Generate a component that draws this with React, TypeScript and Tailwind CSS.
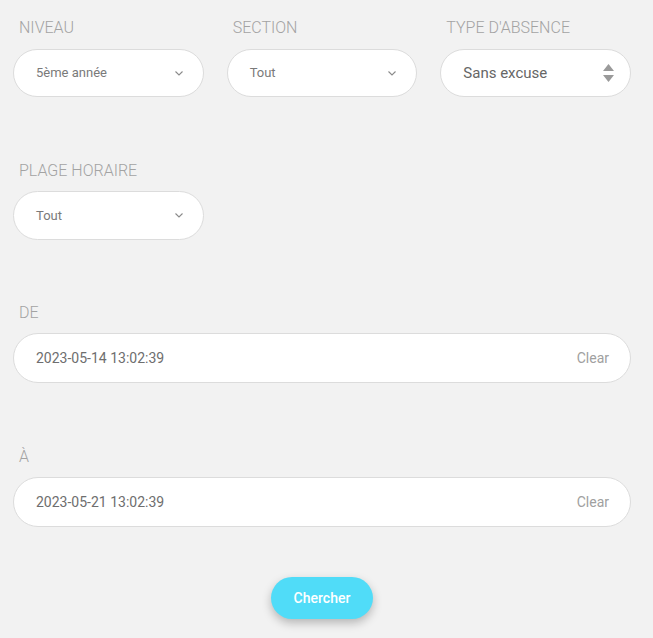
const Chevron = () => (
    <svg width="8" height="5" viewBox="0 0 8 5" fill="none" className="shrink-0">
        <path d="M0.5 0.5L4 4L7.5 0.5" stroke="#8a8a8a" strokeWidth="1.1" />
    </svg>
);

const SortArrows = () => (
    <svg width="11" height="18" viewBox="0 0 11 18" className="shrink-0">
        <path d="M5.5 0L11 7H0Z" fill="#9a9a9a" />
        <path d="M5.5 18L11 11H0Z" fill="#9a9a9a" />
    </svg>
);

const Label = ({ children, className = '' }: { children: string; className?: string }) => (
    <div className={`h-6 leading-6 text-[16px] font-light text-[#a3a3a3] pl-[6px] ${className}`}>
        {children}
    </div>
);

const Select = ({ value }: { value: string }) => (
    <div className="h-12 rounded-full bg-white border border-[#dcdcdc] flex items-center justify-between pl-[22px] pr-[20px]">
        <span className="text-[13px] text-[#7a7a7a]">{value}</span>
        <Chevron />
    </div>
);

const DateInput = ({ value }: { value: string }) => (
    <div className="h-[50px] rounded-full bg-white border border-[#dcdcdc] flex items-center justify-between pl-[22px] pr-[21px]">
        <span className="text-[14px] text-[#6e6e6e]">{value}</span>
        <span className="text-[14px] text-[#a0a0a0]">Clear</span>
    </div>
);

const App = () => {
    return (
        <div
            className="min-h-screen bg-[#f2f2f2] pl-[13px] pr-[22px] pt-[16px] pb-4"
            style={{ fontFamily: 'Roboto, "Liberation Sans", sans-serif' }}
        >
            {/* row 1 */}
            <div className="grid grid-cols-3 gap-[23px]">
                <div>
                    <Label className="mb-[9px]">NIVEAU</Label>
                    <Select value="5ème année" />
                </div>
                <div>
                    <Label className="mb-[9px]">SECTION</Label>
                    <Select value="Tout" />
                </div>
                <div>
                    <Label className="mb-[9px]">TYPE D'ABSENCE</Label>
                    <div className="h-12 rounded-full bg-white border border-[#dcdcdc] flex items-center justify-between pl-[22px] pr-[16px]">
                        <span className="text-[15px] text-[#666666]">Sans excuse</span>
                        <SortArrows />
                    </div>
                </div>
            </div>

            {/* row 2 */}
            <div className="grid grid-cols-3 gap-[23px] mt-[62px]">
                <div>
                    <Label className="mb-2">PLAGE HORAIRE</Label>
                    <div className="h-[49px] rounded-full bg-white border border-[#dcdcdc] flex items-center justify-between pl-[22px] pr-[20px]">
                        <span className="text-[13px] text-[#7a7a7a]">Tout</span>
                        <Chevron />
                    </div>
                </div>
            </div>

            <div className="mt-[61px]">
                <Label className="mb-2">DE</Label>
                <DateInput value="2023-05-14 13:02:39" />
            </div>

            <div className="mt-[62px]">
                <Label className="mb-2">À</Label>
                <DateInput value="2023-05-21 13:02:39" />
            </div>

            <div className="flex justify-center mt-[50px]">
                <button
                    type="submit"
                    className="h-[42px] w-[102px] rounded-full bg-[#50dcf8] text-white text-[14px] font-medium shadow-[0_4px_10px_rgba(0,0,0,0.25)]"
                >
                    Chercher
                </button>
            </div>
        </div>
    );
};

export default App;
